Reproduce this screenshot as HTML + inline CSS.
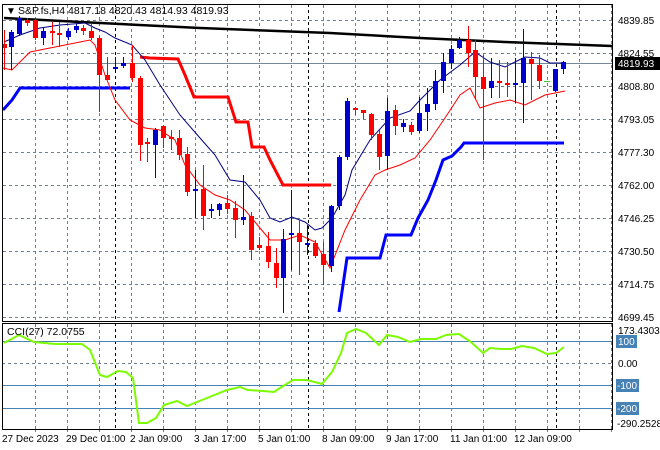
<!DOCTYPE html>
<html><head><meta charset="utf-8"><style>
html,body{margin:0;padding:0;background:#fff;width:660px;height:450px;overflow:hidden}
svg{display:block;font-family:"Liberation Sans",sans-serif;font-size:10px}
</style></head><body>
<svg id="s" width="660" height="450" xmlns="http://www.w3.org/2000/svg">
<rect width="660" height="450" fill="#fff"/>
<g id="grid" stroke="#708090" stroke-dasharray="3,3" stroke-width="1"></g>
<g id="vsep" stroke="#000" stroke-dasharray="3,3" stroke-width="1">
<line x1="115.5" y1="4" x2="115.5" y2="321"/><line x1="308.5" y1="4" x2="308.5" y2="321"/><line x1="556.5" y1="4" x2="556.5" y2="321"/>
<line x1="115.5" y1="323" x2="115.5" y2="429"/><line x1="308.5" y1="323" x2="308.5" y2="429"/><line x1="556.5" y1="323" x2="556.5" y2="429"/>
</g>
<line x1="2" y1="63.5" x2="612" y2="63.5" stroke="#778899"/>
<polyline fill="none" stroke="#000" stroke-width="2.5" points="4,18 100,23 200,28 330,33 420,38 505,42 612,46"/>
<polyline fill="none" stroke="#0000ff" stroke-width="3" points="3,110 12,100 20,88 130,88"/>
<polyline fill="none" stroke="#0000ff" stroke-width="3" points="339,312 343,285 347,258 380,258 386,235 411,235 418,218 428,200 436,180 443,160 452,156 461,147 464,143 564,143"/>
<polyline fill="none" stroke="#ff0000" stroke-width="3" points="140,57 150,58 178,59 185,75 194,97 228,97 236,122 248,122 252,147 264,147 270,160 283,185 331,185"/>
<polyline fill="none" stroke="#000080" stroke-width="1" points="4,42 20,35 40,28 60,25 85,23 95,28 105,32 115,38 132,45 145,60 160,85 180,115 200,138 215,155 230,180 245,182 260,200 270,218 280,222 292,217 305,222 315,230 322,228 332,218 345,195 352,170 370,140 390,118 410,111 420,100 440,80 460,65 475,52 490,62 505,67 515,62 525,57 540,58 550,63 565,63"/>
<polyline fill="none" stroke="#ff0000" stroke-width="1" points="3,68 12,70 30,52 55,47 80,42 90,40 95,45 105,75 115,100 130,120 145,128 160,130 175,140 185,165 200,185 215,195 230,200 245,210 260,228 270,240 285,240 300,235 315,242 330,268 345,230 360,200 375,175 385,170 400,165 415,158 430,140 445,118 460,95 470,88 480,108 495,103 510,100 525,105 545,95 565,91"/>
<g id="candles"></g>
<!-- CCI levels -->
<g stroke="#4682b4" stroke-width="1">
<line x1="2" y1="341.5" x2="612" y2="341.5"/><line x1="2" y1="385.5" x2="612" y2="385.5"/><line x1="2" y1="408.5" x2="612" y2="408.5"/>
</g>
<line x1="2" y1="363.5" x2="612" y2="363.5" stroke="#708090" stroke-dasharray="3,3"/>
<polyline fill="none" stroke="#7cfc00" stroke-width="2" points="4,343 19,335 34,342 55,344 82,344 90,350 100,375 107,377 118,371 126,372 133,378 139,423 147,423 156,418 164,405 177,401 187,406 202,400 227,390 240,387 248,390 263,391 274,392 280,388 293,380 307,380 322,384 332,372 341,353 347,333 356,329 366,333 379,345 387,335 398,337 410,342 421,339 436,339 446,335 459,334 471,342 483,353 490,348 501,349 511,349 522,346 534,348 547,354 556,353 564,347"/>
<!-- frames -->
<rect x="2.5" y="4.5" width="610" height="317" fill="none" stroke="#000"/>
<rect x="2.5" y="323.5" width="610" height="106" fill="none" stroke="#000"/>
<!-- texts -->
<text x="6" y="14" font-size="10">▼</text>
<text x="18" y="14" font-size="10.5">S&amp;P.fs,H4  4817.18 4820.43 4814.93 4819.93</text>
<text x="7" y="335" font-size="10.5">CCI(27) 72.0755</text>
<g font-size="10" fill="#000">
<text x="618" y="24">4839.85</text>
<text x="618" y="57">4824.55</text>
<text x="618" y="90">4808.80</text>
<text x="618" y="123">4793.05</text>
<text x="618" y="156">4777.30</text>
<text x="618" y="189">4762.00</text>
<text x="618" y="222">4746.25</text>
<text x="618" y="255">4730.50</text>
<text x="618" y="288">4714.75</text>
<text x="618" y="321">4699.45</text>
<text x="618" y="334">173.4303</text>
<text x="618" y="367">0.00</text>
<text x="617" y="427">-290.2528</text>
</g>
<rect x="615" y="57" width="45" height="13" fill="#000"/>
<text x="618" y="67" fill="#fff" font-size="10">4819.93</text>
<rect x="616" y="335" width="21" height="13" fill="#4682b4"/><text x="618" y="345" fill="#fff">100</text>
<rect x="616" y="379" width="23" height="13" fill="#4682b4"/><text x="617" y="389" fill="#fff">-100</text>
<rect x="616" y="402" width="23" height="13" fill="#4682b4"/><text x="617" y="412" fill="#fff">-200</text>
<g font-size="10" fill="#000">
<text x="2" y="442">27 Dec 2023</text>
<text x="66" y="442">29 Dec 01:00</text>
<text x="130" y="442">2 Jan 09:00</text>
<text x="194" y="442">3 Jan 17:00</text>
<text x="258" y="442">5 Jan 01:00</text>
<text x="322" y="442">8 Jan 09:00</text>
<text x="386" y="442">9 Jan 17:00</text>
<text x="450" y="442">11 Jan 01:00</text>
<text x="514" y="442">12 Jan 09:00</text>
</g>
</svg>
<script>
var NS="http://www.w3.org/2000/svg";
var g=document.getElementById('grid');
function L(p,x1,y1,x2,y2){var l=document.createElementNS(NS,'line');l.setAttribute('x1',x1);l.setAttribute('y1',y1);l.setAttribute('x2',x2);l.setAttribute('y2',y2);p.appendChild(l);return l;}
[20,53,86,119,152,185,218,251,284,317].forEach(function(y){L(g,3,y+.5,612,y+.5);});
for(var x=35;x<612;x+=32){L(g,x+.5,5,x+.5,321);L(g,x+.5,324,x+.5,429);L(g,x+.5,429,x+.5,433);}
var c=[
[4,44,48,30,70,'r'],[11,32,47,30,70,'b'],[19,18,34,16,36,'b'],[27,20,23,18,26,'r'],[35,20,38,19,40,'r'],[43,31,38,28,45,'b'],[52,31,33,22,45,'r'],[59,33,34,22,47,'r'],[68,31,37,28,40,'b'],[76,26,30,24,33,'b'],[83,28,31,25,35,'r'],[91,31,38,24,40,'r'],[99,38,75,36,112,'r'],[107,75,80,57,80,'r'],[115,67,69,57,70,'b'],[123,63,66,57,68,'b'],[132,63,78,45,82,'r'],[140,78,145,76,161,'r'],[147,142,144,138,162,'r'],[155,130,145,128,178,'b'],[163,126,138,125,148,'r'],[171,137,138,130,150,'r'],[179,138,155,130,160,'r'],[187,154,192,147,196,'r'],[195,189,191,170,218,'b'],[203,189,216,165,230,'r'],[211,209,211,204,218,'b'],[219,204,210,203,216,'b'],[227,203,209,195,214,'r'],[235,208,220,201,238,'r'],[243,217,220,175,225,'b'],[251,216,250,212,260,'r'],[259,245,248,237,250,'r'],[268,246,262,232,268,'r'],[276,263,278,248,288,'r'],[283,239,278,229,313,'b'],[291,233,235,190,270,'b'],[299,233,242,220,275,'r'],[307,243,245,225,255,'b'],[315,243,256,240,258,'r'],[323,254,265,242,285,'r'],[331,206,266,205,272,'b'],[339,157,206,155,210,'b'],[347,101,157,98,160,'b'],[355,108,110,107,115,'r'],[363,110,113,110,119,'r'],[371,114,135,113,140,'r'],[379,134,157,130,170,'r'],[387,111,156,98,170,'b'],[395,110,126,105,135,'r'],[403,123,127,119,132,'b'],[411,125,132,122,135,'r'],[419,113,131,97,133,'b'],[427,104,112,88,131,'b'],[435,81,104,70,110,'b'],[443,62,81,53,93,'b'],[451,49,63,45,69,'b'],[459,40,48,37,49,'b'],[468,40,53,26,67,'r'],[475,50,77,40,100,'r'],[483,77,89,55,160,'r'],[491,81,88,58,98,'b'],[499,81,83,60,98,'r'],[507,83,84,62,97,'r'],[515,83,84,58,103,'b'],[523,58,83,29,123,'b'],[531,59,64,52,100,'r'],[539,65,81,55,89,'r'],[547,81,81,81,81,'g'],[555,69,91,69,92,'b'],[563,62,69,61,74,'b']];
var cg=document.getElementById('candles');
c.forEach(function(k){var col=k[5]=='r'?'#ff0000':(k[5]=='b'?'#0000cc':'#32cd32');
 if(k[5]=='g'){var l=L(cg,k[0]-3,k[1]+.5,k[0]+3,k[1]+.5);l.setAttribute('stroke',col);return;}
 var l=L(cg,k[0]+.5,k[3],k[0]+.5,k[4]);l.setAttribute('stroke',col);
 var r=document.createElementNS(NS,'rect');r.setAttribute('x',k[0]-2);r.setAttribute('y',k[1]);r.setAttribute('width',5);r.setAttribute('height',Math.max(2,k[2]-k[1]));r.setAttribute('fill',col);cg.appendChild(r);});
</script>
</body></html>
